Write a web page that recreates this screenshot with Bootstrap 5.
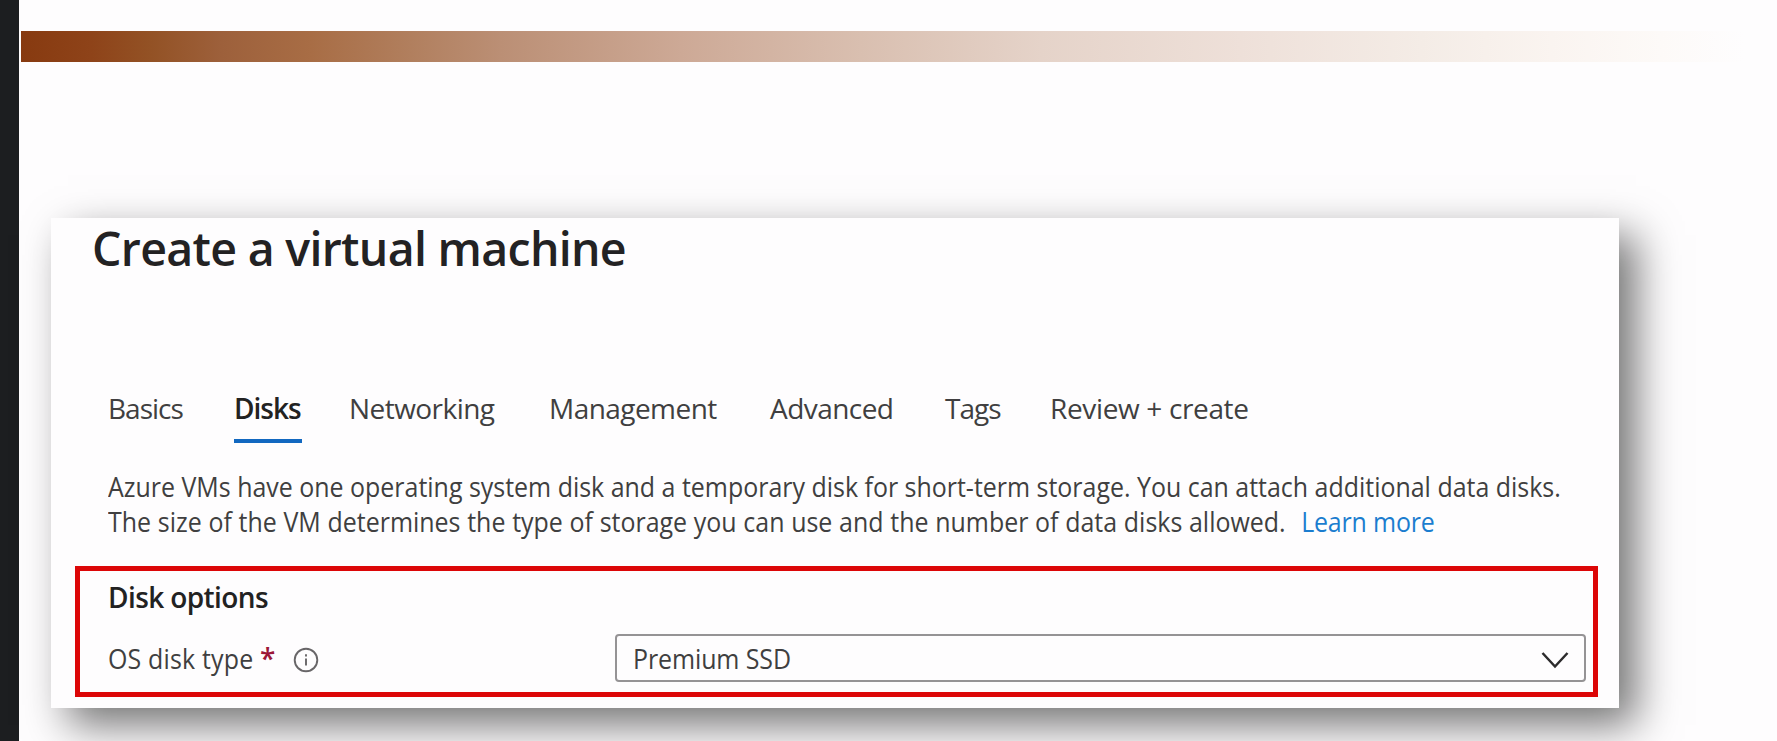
<!DOCTYPE html>
<html lang="en">
<head>
<meta charset="utf-8">
<title>Create a virtual machine</title>
<link href="https://cdn.jsdelivr.net/npm/bootstrap@5.3.0/dist/css/bootstrap.min.css" rel="stylesheet">
<style>
  body { font-family: "Open Sans", "Noto Sans", sans-serif; font-size: 28px; line-height: 38px; color: #403f40; background: #fefdfe; }
  .stage { height: 741px; }
  .rail { width: 19px; background: #1c1e20; }
  .accent-bar { height: 31px; margin: 31px 32px 0 2px; border: 1px solid transparent; border-width: 1px 0;
    background: linear-gradient(90deg, #873a10 0, #8e4319 70px, #935225 130px, #9d603b 200px, #a86d45 290px, #b17f5e 390px, #bb8f75 480px, #cda996 660px, #d9bfb0 840px, #e5d3c9 1020px, #eee0d9 1220px, #f4ece6 1400px, #faf4f0 1530px, #fdfaf8 1640px, #fefdfe 100%) border-box; }
  .vm-panel { width: 1568px; height: 490px; margin: 156px 0 0 32px; padding: 0 20px 0 24px; border: 0; border-radius: 0; background: #fefdfe; color: inherit; box-shadow: 17px 17px 40px rgba(0,0,0,.55); }
  .vm-title { font-size: 46.5px; line-height: 60px; font-weight: 600; color: #232223; margin: 0 0 111px 17px; letter-spacing: -.7px; }
  .inset-text { margin-left: 33px; }
  .vm-tabs .nav-link { padding: 0; height: 54px; border-bottom: 4px solid transparent; color: inherit; white-space: nowrap; letter-spacing: -.55px; }
  .vm-tabs .nav-link.first-tab { width: 126px; letter-spacing: -1px; }
  .vm-tabs .nav-link.active { font-weight: 600; color: #222; border-color: #1268c0; letter-spacing: -1px; }
  .intro { margin-top: 26px; line-height: 34.5px; }
  .narrow { display: inline-block; white-space: nowrap; transform: scaleX(.891); transform-origin: 0 50%; }
  .second-line { word-spacing: .28px; }
  .learn { color: #1b7dcf; text-decoration: none; margin-left: 10px; letter-spacing: -.25px; }
  .options { width: 1523px; height: 131px; margin-top: 28px; border: 5px solid #dc0607; padding: 7px 6px 0 28px; }
  .options h2 { font-size: 28px; line-height: 38px; font-weight: 600; color: #222; margin: 0 0 18px; letter-spacing: -.6px; }
  .field-label { width: 507px; height: 48px; line-height: 48px; }
  .type-name { width: 152px; }
  .type-name .narrow { letter-spacing: .2px; }
  .required { width: 32px; color: #9c1737; font-weight: 600; }
  .field-label svg { margin-top: 4px; }
  .disk-select { width: 971px; height: 48px; line-height: 45px; padding: 0 15px 0 16px; border: 2px solid #959395; border-radius: 4px; }
  .disk-select .narrow { letter-spacing: -.1px; }
  .disk-select svg { margin-top: 3px; }
</style>
</head>
<body>
<div class="stage d-flex overflow-hidden">
  <aside class="rail flex-shrink-0"></aside>
  <main class="flex-grow-1">
    <div class="accent-bar"></div>
    <section class="card vm-panel">
      <h1 class="vm-title">Create a virtual machine</h1>
      <nav class="nav flex-nowrap vm-tabs inset-text">
        <a class="nav-link first-tab" href="#">Basics</a>
        <a class="nav-link active" href="#" style="width:68px">Disks</a>
        <a class="nav-link" href="#" style="width:200px;margin-left:47px">Networking</a>
        <a class="nav-link" href="#" style="width:221px">Management</a>
        <a class="nav-link" href="#" style="width:175px">Advanced</a>
        <a class="nav-link" href="#" style="width:105px;letter-spacing:-1px">Tags</a>
        <a class="nav-link" href="#" style="letter-spacing:-.35px">Review + create</a>
      </nav>
      <div class="intro inset-text">
        <div class="narrow">Azure VMs have one operating system disk and a temporary disk for short-term storage. You can attach additional data disks.<br><span class="second-line">The size of the VM determines the type of storage you can use and the number of data disks allowed. <a class="learn" href="#">Learn more</a></span></div>
      </div>
      <div class="options">
        <h2>Disk options</h2>
        <div class="d-flex">
          <div class="field-label d-flex align-items-center flex-shrink-0">
            <span class="type-name"><span class="narrow">OS disk type</span></span>
            <span class="required">*</span>
            <svg width="28" height="28" viewBox="0 0 28 28" fill="none" stroke="#686668" stroke-width="1.9"><circle cx="14" cy="14" r="11.3"/><path d="M14 12.5v7M14 8.3v2.2"/></svg>
          </div>
          <div class="disk-select d-flex align-items-center justify-content-between">
            <span class="narrow">Premium SSD</span>
            <svg width="28" height="18" viewBox="0 0 28 18" fill="none" stroke="#2c2b2c" stroke-width="2.5"><path d="M1.5 2 14 15.5 26.5 2"/></svg>
          </div>
        </div>
      </div>
    </section>
  </main>
</div>
<script src="https://cdn.jsdelivr.net/npm/bootstrap@5.3.0/dist/js/bootstrap.bundle.min.js"></script>
</body>
</html>
